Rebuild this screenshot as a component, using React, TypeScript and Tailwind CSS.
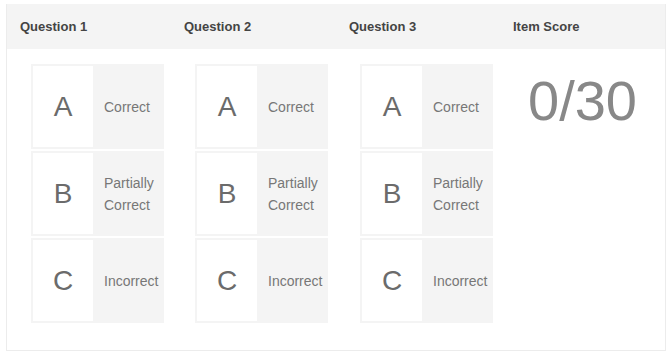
import React from 'react';

const options = [
  { letter: 'A', label: 'Correct' },
  { letter: 'B', label: 'Partially Correct' },
  { letter: 'C', label: 'Incorrect' },
];

const questions = ['Question 1', 'Question 2', 'Question 3'];

function OptionCard({ letter, label }: { letter: string; label: string }) {
  return (
    <div className="flex w-[133px] h-[85px] bg-[#f4f4f4]">
      <div className="m-[2px] mr-0 w-[60px] bg-white flex items-center justify-center text-[28px] text-[#6b6b6b]">
        {letter}
      </div>
      <div className="flex-1 flex items-center pl-[11px] pr-1 text-[14px] leading-[22px] text-[#777]">
        {label}
      </div>
    </div>
  );
}

export default function App() {
  return (
    <div className="bg-white w-[671px] h-[354px] pt-[4px] pl-[6px]" style={{ fontFamily: '"Liberation Sans", Arial, sans-serif' }}>
      <div className="w-[660px] h-[347px] border border-[#ececec] border-t-0 flex flex-col">
        <div className="grid grid-cols-[164px_165px_164px_1fr] h-[45px] bg-[#f4f4f4] items-center">
          {[...questions, 'Item Score'].map(h => (
            <div key={h} className="pl-[13px] text-[13px] font-bold text-[#444]">{h}</div>
          ))}
        </div>
        <div className="grid grid-cols-[164px_165px_164px_1fr] pt-[15px]">
          {questions.map(q => (
            <div key={q} className="pl-[24px] flex flex-col gap-[2px]">
              {options.map(o => (
                <OptionCard key={o.letter} letter={o.letter} label={o.label} />
              ))}
            </div>
          ))}
          <div className="flex justify-center pt-[9px]">
            <div className="text-[56px] leading-none text-[#888]">0/30</div>
          </div>
        </div>
      </div>
    </div>
  );
}
